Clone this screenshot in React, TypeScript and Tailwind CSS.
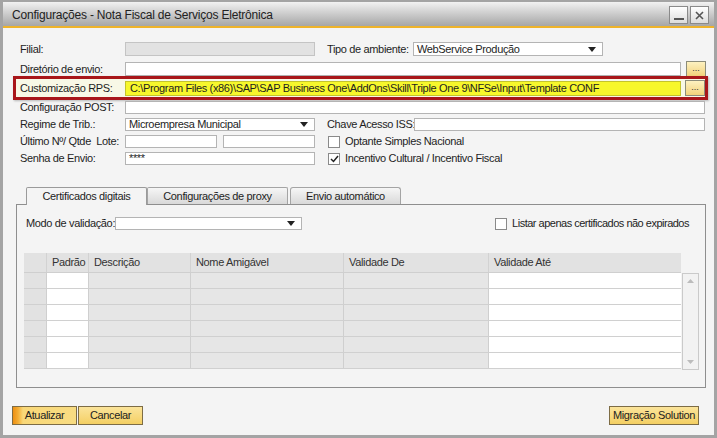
import React from 'react';

const font = "font-['Liberation_Sans',Arial,sans-serif]";

const Arrow = () => (
    <svg width="8" height="5" viewBox="0 0 8 5" className="shrink-0">
        <path d="M0 0h8L4 5z" fill="#222" />
    </svg>
);

const Input = ({ w, value, gray }: { w: string; value?: string; gray?: boolean }) => (
    <div
        className={`${w} h-full border ${gray ? 'bg-[#e2e2e2] border-[#c4c4c4]' : 'bg-white border-[#b4b4b4]'} px-[3px] flex items-center text-[11px] leading-none overflow-hidden whitespace-nowrap`}
    >
        {value}
    </div>
);

const Select = ({ w, value }: { w: string; value?: string }) => (
    <div className={`${w} h-full border border-[#b4b4b4] bg-white pl-[3px] pr-[6px] flex items-center justify-between text-[11px] leading-none`}>
        <span>{value}</span>
        <Arrow />
    </div>
);

const Dots = () => (
    <div className="w-[20px] h-[16px] shrink-0 border border-[#8c8c7a] bg-gradient-to-b from-[#fdf1c0] to-[#f2d27a] flex items-center justify-center text-[9px] leading-none text-[#333] pb-[2px] tracking-normal">
        ...
    </div>
);

const Check = ({ checked }: { checked?: boolean }) => (
    <div className="w-[12px] h-[12px] border border-[#8a8a8a] bg-white flex items-center justify-center shrink-0">
        {checked && (
            <svg width="9" height="8" viewBox="0 0 9 8">
                <path d="M1 4l2.5 2.5L8 1" stroke="#222" strokeWidth="1.5" fill="none" />
            </svg>
        )}
    </div>
);

const Label = ({ text, w = 'w-[105px]' }: { text: string; w?: string }) => (
    <div className={`${w} shrink-0 text-[11px] leading-none whitespace-pre`}>{text}</div>
);

const cols = [
    { name: '', w: 'w-[22px]', white: false },
    { name: 'Padrão', w: 'w-[42px]', white: true },
    { name: 'Descrição', w: 'w-[102px]', white: false },
    { name: 'Nome Amigável', w: 'w-[153px]', white: false },
    { name: 'Validade De', w: 'w-[145px]', white: false },
    { name: 'Validade Até', w: 'w-[193px]', white: true },
];

const rows = [0, 1, 2, 3, 4, 5];

const YellowButton = ({ text, w, primary }: { text: string; w: string; primary?: boolean }) => (
    <div
        className={`${w} h-[19px] border border-[#7d6c45] flex items-center justify-center text-[11px] leading-none text-[#222] whitespace-nowrap ${
            primary
                ? 'bg-[linear-gradient(90deg,#ee8f12_0px,#f4ad34_5px,#f9d879_10px,#f8dc82_100%)]'
                : 'bg-gradient-to-b from-[#fbe49a] to-[#f4cf62]'
        }`}
    >
        {text}
    </div>
);

export default function App() {
    return (
        <div className={`${font} tracking-[-0.35px] w-[717px] h-[438px] bg-[#f4f4f4] border-l-[3px] border-r-[3px] border-b-[3px] border-t-[2px] border-[#a4a4a4] flex flex-col text-[#1e1e1e] overflow-hidden`}>
            {/* title bar */}
            <div className="h-[24px] shrink-0 bg-gradient-to-b from-[#f2f2f2] to-[#a6a6a6] flex items-center justify-between pl-[9px] pr-[5px]">
                <span className="text-[12px] tracking-[-0.2px] text-[#222] pt-[2px]">Configurações - Nota Fiscal de Serviços Eletrônica</span>
                <div className="flex gap-[2px] pt-[2px]">
                    <div className="w-[19px] h-[18px] border border-[#8a8a8a] bg-gradient-to-b from-[#ffffff] to-[#dcdcdc] flex items-end justify-center pb-[3px]">
                        <div className="w-[10px] h-[2px] bg-[#555]" />
                    </div>
                    <div className="w-[19px] h-[18px] border border-[#8a8a8a] bg-gradient-to-b from-[#ffffff] to-[#dcdcdc] flex items-center justify-center">
                        <svg width="9" height="9" viewBox="0 0 9 9">
                            <path d="M1 1l7 7M8 1L1 8" stroke="#555" strokeWidth="1.6" />
                        </svg>
                    </div>
                </div>
            </div>
            <div className="h-[2px] shrink-0 bg-[#eeb32a]" />

            {/* form */}
            <div className="flex flex-col pt-[14px]">
                <div className="h-[14px] flex items-center pl-[17px]">
                    <Label text="Filial:" />
                    <Input w="w-[190px]" gray />
                    <Label text="Tipo de ambiente:" w="w-[86px] ml-[12px]" />
                    <Select w="w-[190px]" value="WebService Produção" />
                </div>
                <div className="h-[14px] mt-[6px] flex items-center pl-[17px]">
                    <Label text="Diretório de envio:" />
                    <Input w="w-[556px]" />
                    <div className="ml-[5px]"><Dots /></div>
                </div>
                <div className="h-[24px] ml-[10px] w-[695px] border-[3px] border-[#a8161a] bg-[#f8f8e6] flex items-center pl-[4px] shadow-[1px_1px_2px_rgba(0,0,0,0.25)]">
                    <Label text="Customização RPS:" />
                    <div className="w-[557px] h-[15px] border border-[#c4c42c] bg-[#f7f72c] px-[4px] flex items-center text-[11px] leading-none whitespace-nowrap overflow-hidden">
                        C:\Program Files (x86)\SAP\SAP Business One\AddOns\Skill\Triple One 9\NFSe\Input\Template CONF
                    </div>
                    <div className="ml-[4px]"><Dots /></div>
                </div>
                <div className="h-[13px] mt-[1px] flex items-center pl-[17px]">
                    <Label text="Configuração POST:" />
                    <Input w="w-[580px]" />
                </div>
                <div className="h-[13px] mt-[4px] flex items-center pl-[17px]">
                    <Label text="Regime de Trib.:" />
                    <Select w="w-[190px]" value="Microempresa Municipal" />
                    <Label text="Chave Acesso ISS:" w="w-[87px] ml-[12px]" />
                    <Input w="w-[291px]" />
                </div>
                <div className="h-[13px] mt-[4px] flex items-center pl-[17px]">
                    <Label text="Último Nº/ Qtde  Lote:" />
                    <Input w="w-[92px]" />
                    <div className="ml-[6px] h-full flex"><Input w="w-[92px]" /></div>
                    <div className="ml-[13px] flex items-center gap-[5px]">
                        <Check />
                        <span className="text-[11px] leading-none">Optante Simples Nacional</span>
                    </div>
                </div>
                <div className="h-[13px] mt-[4px] flex items-center pl-[17px]">
                    <Label text="Senha de Envio:" />
                    <Input w="w-[190px]" value="****" />
                    <div className="ml-[13px] flex items-center gap-[5px]">
                        <Check checked />
                        <span className="text-[11px] leading-none">Incentivo Cultural / Incentivo Fiscal</span>
                    </div>
                </div>
            </div>

            {/* tabs */}
            <div className="mt-[21px] ml-[23px] flex h-[18px] items-end">
                <div className="w-[121px] h-[18px] border border-b-0 border-[#9a9a9a] rounded-t-[2px] bg-[#f4f4f4] flex items-center justify-center text-[11px] leading-none relative z-10 -mb-px pb-px">
                    Certificados digitais
                </div>
                <div className="w-[141px] h-[17px] border border-b-0 border-[#a4a4a4] rounded-t-[2px] bg-gradient-to-b from-[#f6f6f6] to-[#d9d9d9] flex items-center justify-center text-[11px] leading-none">
                    Configurações de proxy
                </div>
                <div className="ml-[2px] w-[111px] h-[17px] border border-b-0 border-[#a4a4a4] rounded-t-[3px] bg-gradient-to-b from-[#f6f6f6] to-[#d9d9d9] flex items-center justify-center text-[11px] leading-none">
                    Envio automático
                </div>
            </div>
            <div className="ml-[13px] w-[690px] h-[184px] border border-[#8e8e8e] flex flex-col">
                <div className="mt-[12px] h-[13px] flex items-center justify-between pl-[9px] pr-[16px]">
                    <div className="flex items-center h-full">
                        <span className="text-[11px] leading-none">Modo de validação:</span>
                        <Select w="w-[187px]" />
                    </div>
                    <div className="flex items-center gap-[5px]">
                        <Check />
                        <span className="text-[11px] leading-none whitespace-nowrap tracking-[-0.5px]">Listar apenas certificados não expirados</span>
                    </div>
                </div>

                {/* grid */}
                <div className="mt-[23px] ml-[7px] flex">
                    <div className="flex flex-col">
                        <div className="flex h-[20px] bg-[#e2e2e2] border-b border-[#cfcfcf]">
                            {cols.map((c, i) => (
                                <div
                                    key={i}
                                    className={`${c.w} h-full ${i > 0 ? 'border-l border-[#d2d2d2]' : ''} pl-[5px] flex items-center text-[11px] leading-none text-[#333] whitespace-nowrap`}
                                >
                                    {c.name}
                                </div>
                            ))}
                        </div>
                        {rows.map((r) => (
                            <div key={r} className="flex h-[16px]">
                                {cols.map((c, i) => (
                                    <div
                                        key={i}
                                        className={`${c.w} h-full border-b border-[#d0d0d0] ${i > 0 ? 'border-l border-l-[#cfcfcf]' : ''} ${
                                            c.white ? 'bg-white' : i === 0 ? 'bg-[#e2e2e2]' : 'bg-[#e6e6e6]'
                                        }`}
                                    />
                                ))}
                            </div>
                        ))}
                    </div>
                    <div className="mt-[20px] ml-[1px] w-[17px] h-[97px] border border-[#cacaca] bg-[#f2f2f2] flex flex-col items-center justify-between py-[5px]">
                        <svg width="7" height="4" viewBox="0 0 7 4">
                            <path d="M0 4L3.5 0 7 4z" fill="#bcbcbc" />
                        </svg>
                        <svg width="7" height="4" viewBox="0 0 7 4">
                            <path d="M0 0h7L3.5 4z" fill="#bcbcbc" />
                        </svg>
                    </div>
                </div>
            </div>

            {/* buttons */}
            <div className="mt-[18px] flex items-center pl-[9px] pr-[15px]">
                <YellowButton text="Atualizar" w="w-[65px]" primary />
                <div className="ml-[1px]"><YellowButton text="Cancelar" w="w-[65px]" /></div>
                <div className="ml-auto"><YellowButton text="Migração Solution" w="w-[90px]" /></div>
            </div>
        </div>
    );
}
